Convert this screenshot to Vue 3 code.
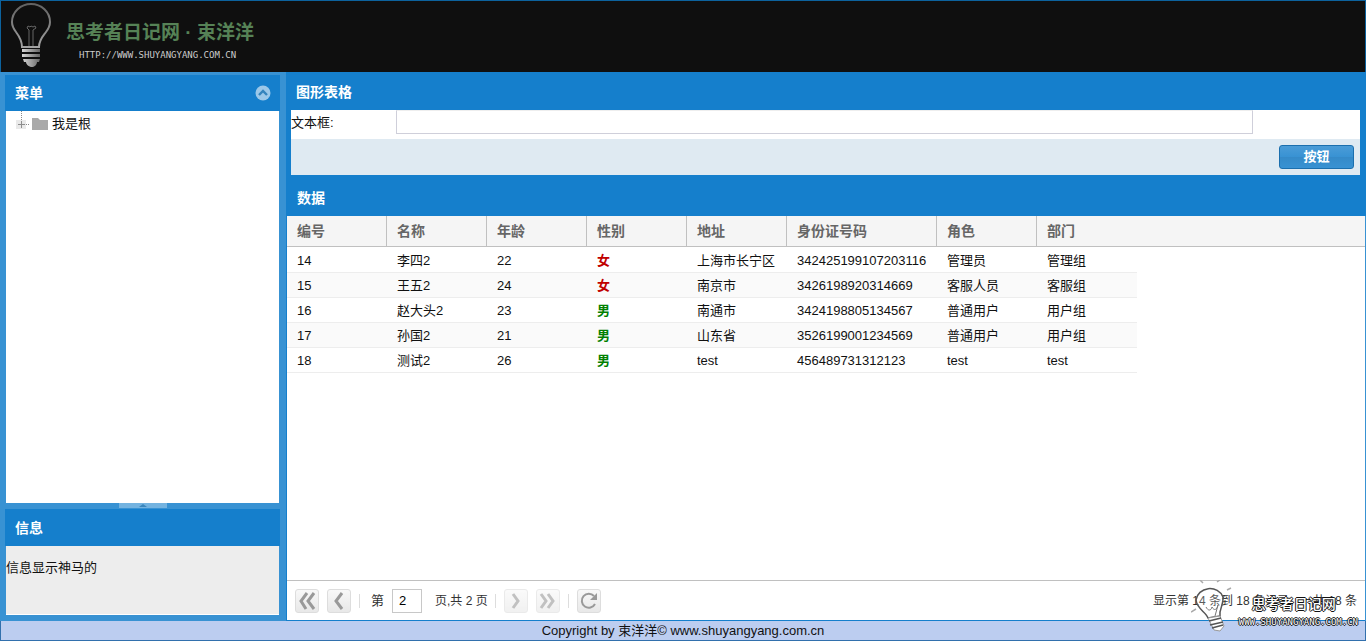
<script setup>
import { ref } from 'vue'

const query = ref('')
const page = ref('2')
const columns = ['编号', '名称', '年龄', '性别', '地址', '身份证号码', '角色', '部门']
const rows = [
  ['14', '李四2', '22', '女', '上海市长宁区', '342425199107203116', '管理员', '管理组'],
  ['15', '王五2', '24', '女', '南京市', '3426198920314669', '客服人员', '客服组'],
  ['16', '赵大头2', '23', '男', '南通市', '3424198805134567', '普通用户', '用户组'],
  ['17', '孙国2', '21', '男', '山东省', '3526199001234569', '普通用户', '用户组'],
  ['18', '测试2', '26', '男', 'test', '456489731312123', 'test', 'test']
]
const sexClass = (value) => ({ female: value === '女', male: value === '男' })
</script>

<template>
  <div class="viewport">
    <header class="banner">
      <svg class="bulb" width="52" height="70" viewBox="0 0 52 70" fill="none">
        <defs>
          <linearGradient id="glass" x1="0" y1="0" x2="0" y2="1">
            <stop offset="0" stop-color="#626262" />
            <stop offset="1" stop-color="#a2a2a2" />
          </linearGradient>
          <linearGradient id="screw" x1="0" y1="0" x2="1" y2="0">
            <stop offset="0" stop-color="#d6d6d6" />
            <stop offset="1" stop-color="#666" />
          </linearGradient>
        </defs>
        <path d="M21 46C21 39 18 35 15 31C12 27 11 25 11 21A19 18 0 0 1 49 21C49 25 48 27 45 31C42 35 38 39 38 46Z" stroke="url(#glass)" stroke-width="2" />
        <path d="M28 45V29l-2-2 1-2 2 1 1-1 2 1 2-1 1 2-3 2v16" stroke="#666" />
        <path d="M21 48h18v3H21zM21 53h18v3H21zM22 58h17l-1 3H23zM25 61h11c0 3-3 5-5 5s-6-2-6-5z" fill="url(#screw)" />
      </svg>
      <div class="brand">
        <strong>思考者日记网 · 束洋洋</strong>
        <span>HTTP://WWW.SHUYANGYANG.COM.CN</span>
      </div>
    </header>

    <div class="middle">
      <aside class="side">
        <section class="panel menu">
          <div class="title">
            <h2>菜单</h2>
            <button class="collapse" type="button" aria-label="折叠">
              <svg width="16" height="16" viewBox="0 0 16 16">
                <circle cx="8" cy="8" r="7.5" fill="#9bc8e9" />
                <path d="M4 10l4-4 4 4" fill="none" stroke="#3484bd" stroke-width="2.4" />
              </svg>
            </button>
          </div>
          <div class="tree">
            <svg width="34" height="22" viewBox="0 0 34 22">
              <path d="M7.500 0v9M12 13.500h4" stroke="#888" stroke-dasharray="1 1" />
              <rect x="2" y="9" width="10" height="9" fill="#e9e9e9" />
              <path d="M4 13.500h7M7.500 10v7" stroke="#8d8d8d" />
              <path d="M18 7h6l2 2h8v10H18z" fill="#a9a9a9" />
            </svg>
            <span>我是根</span>
          </div>
        </section>
        <div class="splitter"><button type="button" aria-label="收起信息">
          <svg width="8" height="4" viewBox="0 0 8 4"><path d="M0 4l4-3 4 3z" fill="#3a86bd" /></svg>
        </button></div>
        <section class="panel info">
          <div class="title"><h2>信息</h2></div>
          <p>信息显示神马的</p>
        </section>
      </aside>

      <main class="content">
        <form class="form" @submit.prevent>
          <h2>图形表格</h2>
          <div class="field">
            <label for="query">文本框:</label>
            <input id="query" v-model="query" type="text">
          </div>
          <div class="actions"><button type="submit">按钮</button></div>
        </form>

        <section class="data">
          <h2>数据</h2>
          <div class="grid">
            <table>
              <thead>
                <tr><th v-for="c in columns" :key="c" scope="col">{{ c }}</th><td class="rest"></td></tr>
              </thead>
              <tbody>
                <tr v-for="row in rows" :key="row[0]">
                  <td v-for="(cell, i) in row" :key="i" :class="sexClass(cell)">{{ cell }}</td>
                </tr>
              </tbody>
            </table>
          </div>
          <nav class="pager">
            <button type="button" aria-label="首页">
              <svg width="22" height="22" viewBox="0 0 22 22"><path d="M11 3L5 11l5 8M18 3l-6 8 6 8" /></svg>
            </button>
            <button type="button" aria-label="上一页">
              <svg width="22" height="22" viewBox="0 0 22 22"><path d="M14 3L8 11l6 8" /></svg>
            </button>
            <i></i>
            <label for="page">第</label>
            <input id="page" v-model="page" type="text">
            <span class="total">页,共 2 页</span>
            <i></i>
            <button type="button" disabled aria-label="下一页">
              <svg width="22" height="22" viewBox="0 0 22 22"><path d="M8 4l5 7-5 7" /></svg>
            </button>
            <button type="button" disabled aria-label="末页">
              <svg width="22" height="22" viewBox="0 0 22 22"><path d="M4 4l5 7-5 7M11 4l5 7-5 7" /></svg>
            </button>
            <i></i>
            <button type="button" aria-label="刷新">
              <svg width="22" height="22" viewBox="0 0 22 22"><path class="arc" d="M17 14a7 7 0 1 1-1-8" /><path class="solid" d="M19 3v7h-7z" /></svg>
            </button>
            <span class="summary">显示第 14 条到 18 条记录，一共 18 条</span>
          </nav>
        </section>
      </main>
    </div>

    <footer>Copyright by 束洋洋© www.shuyangyang.com.cn</footer>

    <div class="watermark">
      <svg width="48" height="52" viewBox="0 0 48 52" fill="none">
        <path d="M17 38C15 32 6 29 5 20a14 13 0 0 1 27-3c1 8-4 11-3 19z" fill="#fff" fill-opacity=".2" stroke="#555" stroke-width="1.500" />
        <path d="M15 27c2 4 5 4 6 0 2 4 5 3 6-2l-3 11" stroke="#777" />
        <path d="M17 38l12-2 4 10-4 5-6-1z" fill="#fff" stroke="#999" />
        <path d="M18 41l12-3M19 45l13-3M21 48l11-3" stroke="#555" stroke-width="1.500" />
        <path d="M12 3l-3-3M26 2l3-2M5 29l-5 3M36 10l4-2" stroke="#aaa" stroke-width="1.500" />
      </svg>
      <div>
        <strong>思考者日记网</strong>
        <span>WWW.SHUYANGYANG.COM.CN</span>
      </div>
    </div>
  </div>
</template>

<style>
body {
  margin: 0;
}
</style>

<style scoped>
.viewport,
.viewport * {
  box-sizing: border-box;
}

.viewport {
  position: relative;
  display: flex;
  flex-direction: column;
  min-height: 100vh;
  background: #3892d3;
  color: #111;
  font: 13px/18px "Liberation Sans", "Noto Sans CJK SC", sans-serif;
}

button,
input {
  font: inherit;
}

h2,
p {
  margin: 0;
}

h2 {
  color: #fff;
  font-size: 14px;
  line-height: 18px;
  font-weight: 700;
}

.banner {
  display: flex;
  height: 72px;
  border: 1px solid #0c629d;
  border-bottom: 0;
  background: #0f0f0f;
}

.bulb {
  flex: none;
}

.brand {
  display: flex;
  flex-direction: column;
  padding: 19px 0 0 13px;
  color: #568256;
}

.brand strong {
  font-size: 19px;
  line-height: 26px;
  font-weight: 700;
}

.brand span {
  padding: 4px 0 0 13px;
  color: #ccc;
  font-family: "DejaVu Sans Mono", monospace;
  font-size: 9px;
  line-height: 10px;
}

.middle {
  display: flex;
  flex: 1;
}

.side {
  display: flex;
  flex-direction: column;
  flex: none;
  width: 286px;
  padding: 3px 6px 6px 5px;
}

.title {
  display: flex;
  align-items: center;
  justify-content: space-between;
  height: 36px;
  padding: 0 9px 0 10px;
  background: #157fcc;
}

.collapse {
  display: flex;
  padding: 0;
  border: 0;
  background: none;
}

.menu {
  display: flex;
  flex-direction: column;
  flex: 1;
}

.tree {
  display: flex;
  flex: 1;
  gap: 4px;
  margin: 0 1px;
  padding: 0 0 0 8px;
  background: #fff;
}

.tree span {
  padding-top: 4px;
}

.splitter {
  display: flex;
  justify-content: center;
  height: 6px;
}

.splitter button {
  display: flex;
  justify-content: center;
  width: 48px;
  height: 5px;
  padding: 0;
  border: 0;
  background: #74b3e0;
}

.info .title {
  height: 37px;
}

.info p {
  height: 69px;
  margin: 0 1px;
  padding: 13px 0 0;
  border-bottom: 1px solid #fff;
  background: #ededed;
}

.content {
  display: flex;
  flex-direction: column;
  flex: 1;
  min-width: 0;
}

.form {
  padding: 0 6px 5px 5px;
  background: #157fcc;
}

.form h2 {
  padding: 11px 5px 9px;
}

.field {
  display: flex;
  height: 29px;
  background: #fff;
}

.field label {
  flex: none;
  width: 105px;
  padding-top: 4px;
}

.field input {
  flex: 1;
  min-width: 0;
  height: 24px;
  margin-right: 10%;
  border: 1px solid #cfcfda;
  border-top-color: #eee;
  background: #fff;
}

.actions {
  display: flex;
  justify-content: flex-end;
  padding: 6px;
  background: #dfeaf2;
}

.actions button {
  width: 75px;
  height: 24px;
  padding: 0;
  border: 1px solid #1b6fae;
  border-radius: 3px;
  background: linear-gradient(#4b9cd7, #3892d3 50%, #358ac8 51%, #3892d3);
  color: #fff;
  font-weight: 700;
}

.data {
  display: flex;
  flex-direction: column;
  flex: 1;
  margin-right: 1px;
  background: #fff;
  border-left: 1px solid #157fcc;
  border-bottom: 1px solid #157fcc;
}

.data h2 {
  margin-right: -1px;
  padding: 9px 10px;
  background: #157fcc;
}

.grid {
  flex: 1;
}

table {
  width: 100%;
  border-collapse: separate;
  border-spacing: 0;
  table-layout: fixed;
}

th,
td {
  padding: 0 10px;
  text-align: left;
  white-space: nowrap;
}

th {
  width: 100px;
  height: 31px;
  border-right: 1px solid #c0c0c0;
  border-bottom: 1px solid #c0c0c0;
  background: #f5f5f5;
  color: #666;
  font-size: 14px;
}

th:nth-child(6) {
  width: 150px;
}

th:nth-child(8) {
  border-right: 0;
}

.rest {
  border-bottom: 1px solid #c0c0c0;
  background: #f5f5f5;
}

tbody td {
  height: 25px;
  padding-top: 2px;
  border-bottom: 1px solid #ededed;
}

tbody tr:first-child td {
  border-top: 1px solid #fff;
  height: 26px;
}

tbody tr:nth-child(even) td {
  background: #fafafa;
}

.female {
  color: #c00000;
  font-weight: 700;
}

.male {
  color: #008000;
  font-weight: 700;
}

.pager {
  display: flex;
  align-items: center;
  height: 40px;
  padding: 0 8px;
  border-top: 1px solid #c0c0c0;
  color: #333;
}

.pager button {
  display: flex;
  align-items: center;
  justify-content: center;
  width: 24px;
  height: 24px;
  margin-right: 8px;
  padding: 0;
  border: 1px solid #ddd;
  border-radius: 3px;
  background: linear-gradient(#f8f8f8, #e8e8e8);
}

.pager button:disabled {
  opacity: .6;
}

.pager svg {
  fill: none;
  stroke: #999;
  stroke-width: 3;
}

.pager .arc {
  stroke-width: 2;
}

.pager .solid {
  fill: #999;
  stroke: none;
}

.pager i {
  width: 1px;
  height: 14px;
  margin-right: 8px;
  background: #ddd;
}

.pager label {
  margin: 0 8px 0 3px;
}

.pager input {
  width: 30px;
  height: 24px;
  padding: 0 6px;
  border: 1px solid #c8c8c8;
}

.total {
  margin: 0 7px 0 13px;
  font-size: 12px;
}

.summary {
  margin-left: auto;
  font-size: 12px;
}

footer {
  height: 20px;
  padding-top: 1px;
  border: 1px solid #3270ad;
  border-top: 0;
  background: #bccdf0;
  text-align: center;
}

.watermark {
  position: absolute;
  right: 8px;
  bottom: 9px;
  display: flex;
  pointer-events: none;
}

.watermark div {
  display: flex;
  flex-direction: column;
  padding-top: 15px;
  color: #fff;
  text-shadow: 1px 0 #111, -1px 0 #111, 0 1px #111, 0 -1px #111;
}

.watermark strong {
  padding-left: 13px;
  font-size: 14px;
  line-height: 18px;
  font-weight: 500;
}

.watermark span {
  font-family: "DejaVu Sans Mono", monospace;
  font-size: 9px;
  line-height: 18px;
}
</style>
